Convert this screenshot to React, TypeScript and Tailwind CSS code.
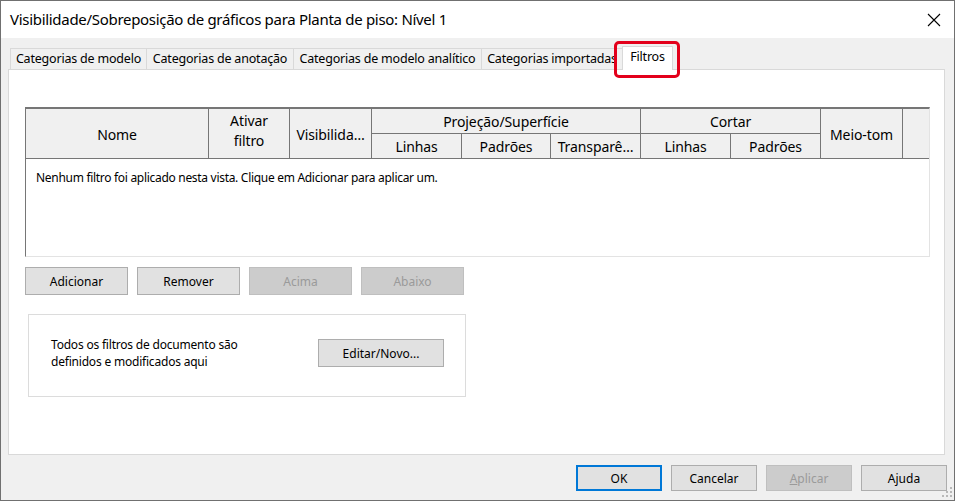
import React from 'react';

const tabs = [
  { label: 'Categorias de modelo', w: 'w-[136px]' },
  { label: 'Categorias de anotação', w: 'w-[147px]' },
  { label: 'Categorias de modelo analítico', w: 'w-[188px]' },
  { label: 'Categorias importadas', w: 'w-[141px]' },
];

function Btn({ label, disabled, w = 'w-[103px]', h = 'h-[28px]' }: { label: React.ReactNode; disabled?: boolean; w?: string; h?: string }) {
  return (
    <div
      className={`${w} ${h} flex items-center justify-center border text-[12px] pt-[1px] ${
        disabled ? 'bg-[#cccccc] border-[#bfbfbf] text-[#9a9a9a]' : 'bg-[#e1e1e1] border-[#adadad] text-black'
      }`}
    >
      {label}
    </div>
  );
}

const cell = 'flex items-center justify-center border-r border-b border-[#767676] text-[14px] leading-[20px] text-center tracking-[-0.1px] pt-[2px]';

export default function App() {
  return (
    <div className="relative w-[955px] h-[501px] flex flex-col border border-[#707070] bg-[#f0f0f0] text-black font-['Noto_Sans',sans-serif] overflow-hidden">
      {/* title bar */}
      <div className="h-[37px] shrink-0 bg-white flex items-center justify-between pl-[9px] pr-[13px]">
        <span className="text-[15px] tracking-[-0.3px]">Visibilidade/Sobreposição de gráficos para Planta de piso: Nível 1</span>
        <svg width="14" height="14" viewBox="0 0 14 14" className="text-black">
          <path d="M1 1 L13 13 M13 1 L1 13" stroke="currentColor" strokeWidth="1.1" />
        </svg>
      </div>

      <div className="flex-1 flex flex-col pl-[7px] pr-[7px] pt-[8px]">
        {/* tabs */}
        <div className="h-[23px] flex items-end pl-[2px] text-[12.5px] tracking-[-0.2px]">
          {tabs.map((t) => (
            <div
              key={t.label}
              className={`${t.w} h-[21px] border-l border-t border-[#d9d9d9] bg-[#f0f0f0] flex items-center justify-center whitespace-nowrap overflow-hidden`}
            >
              {t.label}
            </div>
          ))}
          <div className="relative z-10 w-[51px] h-[24px] -mb-[1px] border-x border-t border-[#d9d9d9] bg-white flex items-start justify-center pt-[1px]">
            Filtros
            <div className="absolute -left-[9px] -top-[6px] w-[66px] h-[37px] border-[3px] border-[#e3001b] rounded-[5px] pointer-events-none" />
          </div>
        </div>

        {/* panel */}
        <div className="h-[386px] mr-[2px] bg-white border border-[#d9d9d9] pl-[16px] pr-[14px] pt-[37px]">
          <div className="border-t-2 border-l border-t-[#767676] border-l-[#767676] border-r border-b border-r-[#e3e3e3] border-b-[#e3e3e3]">
            <div className="grid grid-cols-[183px_81px_82px_90px_89px_90px_90px_90px_82px_1fr] grid-rows-[25px_25px] bg-[#f0f0f0]">
              <div className={`${cell} row-span-2`}>Nome</div>
              <div className={`${cell} row-span-2 !pt-0 pb-[5px]`}>
                Ativar
                <br />
                filtro
              </div>
              <div className={`${cell} row-span-2`}>Visibilida…</div>
              <div className={`${cell} col-span-3`}>Projeção/Superfície</div>
              <div className={`${cell} col-span-2`}>Cortar</div>
              <div className={`${cell} row-span-2`}>Meio-tom</div>
              <div className="row-span-2 border-b border-[#767676]" />
              <div className={cell}>Linhas</div>
              <div className={cell}>Padrões</div>
              <div className={cell}>Transparê…</div>
              <div className={cell}>Linhas</div>
              <div className={cell}>Padrões</div>
            </div>
            <div className="h-[97px] pl-[10px] pt-[10px] text-[12px] tracking-[-0.3px]">
              Nenhum filtro foi aplicado nesta vista. Clique em Adicionar para aplicar um.
            </div>
          </div>

          <div className="mt-[10px] flex gap-[9px]">
            <Btn label="Adicionar" />
            <Btn label="Remover" />
            <Btn label="Acima" disabled />
            <Btn label="Abaixo" disabled />
          </div>

          <div className="mt-[19px] ml-[3px] w-[438px] h-[83px] border border-[#dcdcdc] flex items-center pl-[22px] pb-[5px]">
            <div className="w-[267px] text-[12px] leading-[17px] tracking-[-0.2px]">
              Todos os filtros de documento são
              <br />
              definidos e modificados aqui
            </div>
            <Btn label="Editar/Novo..." w="w-[126px]" />
          </div>
        </div>

        {/* dialog buttons */}
        <div className="mt-[10px] flex justify-end gap-[9px]">
          <div className="w-[86px] h-[26px] flex items-center justify-center bg-[#e1e1e1] border-2 border-[#0078d7] text-[12px] pt-[1px]">OK</div>
          <Btn label="Cancelar" w="w-[86px]" h="h-[26px]" />
          <Btn
            label={
              <span>
                <span className="underline">A</span>plicar
              </span>
            }
            disabled
            w="w-[86px]"
            h="h-[26px]"
          />
          <Btn label="Ajuda" w="w-[86px]" h="h-[26px]" />
        </div>
      </div>

      {/* size grip */}
      <svg width="11" height="11" viewBox="0 0 11 11" className="absolute right-[1px] bottom-[2px]">
        <g fill="#b8b8b8">
          <rect x="8" y="0" width="2" height="2" />
          <rect x="4" y="4" width="2" height="2" />
          <rect x="8" y="4" width="2" height="2" />
          <rect x="0" y="8" width="2" height="2" />
          <rect x="4" y="8" width="2" height="2" />
          <rect x="8" y="8" width="2" height="2" />
        </g>
      </svg>
    </div>
  );
}
